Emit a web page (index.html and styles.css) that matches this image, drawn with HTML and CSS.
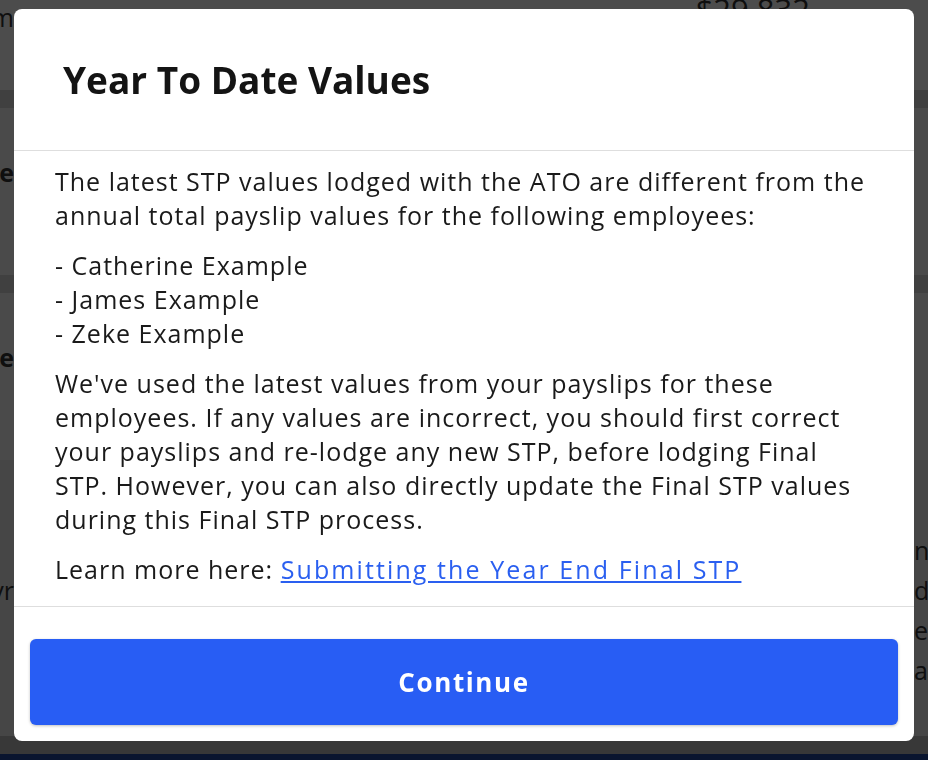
FILE: index.html
```html
<html>

<head>
    <title>Year To Date Values</title>
    <link rel="stylesheet" href="styles.css">
</head>

<body>

    <div class="page">
        <div class="row row-top">
            <span class="frag-left">Sum</span>
            <span class="amount">$29,832</span>
            <span class="frag-right"></span>
        </div>
        <div class="band"></div>
        <div class="row row-emp">
            <div class="frag-left">
                <div class="stack">
                    <b>Catherine</b>
                    <span>Program</span>
                </div>
            </div>
        </div>
        <div class="band"></div>
        <div class="row row-emp">
            <div class="frag-left">
                <div class="stack">
                    <b>Employee</b>
                    <span>Program</span>
                </div>
            </div>
        </div>
        <div class="row row-note">
            <div class="frag-left">
                <div class="stack">
                    <span>you may</span>
                    <span>weekly pay yr</span>
                    <span>hour</span>
                    <span>lodg</span>
                </div>
            </div>
            <div class="frag-right">
                <div class="stack">
                    <span>n</span>
                    <span>d</span>
                    <span>ei</span>
                    <span>a</span>
                </div>
            </div>
        </div>
        <div class="footer-bar"></div>
    </div>

    <div class="overlay">
        <div class="modal">
            <div class="modal-header">
                <h2>Year To Date Values</h2>
            </div>
            <div class="modal-body">
                <p>The latest STP values lodged with the ATO are different from the annual total payslip values for the following employees:</p>
                <p>- Catherine Example<br>- James Example<br>- Zeke Example</p>
                <p>We've used the latest values from your payslips for these employees. If any values are incorrect, you should first correct your payslips and re-lodge any new STP, before lodging Final STP. However, you can also directly update the Final STP values during this Final STP process.</p>
                <p>Learn more here: <a href="#">Submitting the Year End Final STP</a></p>
            </div>
            <div class="modal-footer">
                <button class="btn-continue">Continue</button>
            </div>
        </div>
    </div>

</body>

</html>
```

FILE: styles.css
```css
body {
    margin: 0;
    height: 760px;
    overflow: hidden;
    font-family: 'Open Sans', 'Noto Sans', sans-serif;
    color: #1a1a1a;
    background-color: #ffffff;
}

/* page behind the dialog */

.page {
    display: flex;
    flex-direction: column;
    height: 760px;
    font-size: 25px;
    color: #333333;
}

.row {
    display: flex;
    justify-content: space-between;
    background-color: #f7f7f7;
}

.row-top {
    height: 90px;
    background-color: #ffffff;
    align-items: flex-start;
}

.band {
    height: 18px;
    background-color: #d8d8d8;
}

.row-emp {
    height: 167px;
    padding-top: 44px;
    box-sizing: border-box;
}

.row-note {
    flex: 1;
    padding-top: 70px;
    background-color: #ececec;
}

.footer-bar {
    height: 18px;
    background-color: #bbbbbb;
    border-bottom: 6px solid #22479e;
}

.frag-left {
    width: 14px;
    overflow: hidden;
    display: flex;
    justify-content: flex-end;
    white-space: nowrap;
}

.frag-right {
    width: 14px;
    overflow: hidden;
    white-space: nowrap;
}

.amount {
    margin-left: auto;
    margin-right: 104px;
    margin-top: -8px;
    font-size: 31px;
    line-height: 34px;
}

.stack {
    display: flex;
    flex-direction: column;
    line-height: 40px;
}

.stack b {
    font-weight: 700;
}

/* dialog */

.overlay {
    position: fixed;
    top: 0;
    left: 0;
    right: 0;
    bottom: 0;
    background-color: rgba(0, 0, 0, 0.7);
    display: flex;
    justify-content: center;
    align-items: flex-start;
    padding-top: 9px;
}

.modal {
    width: 900px;
    background-color: #ffffff;
    border-radius: 8px;
    overflow: hidden;
}

.modal-header {
    padding: 50px 49px;
    border-bottom: 1px solid #dedede;
}

.modal-header h2 {
    margin: 0;
    font-size: 37px;
    line-height: 41px;
    font-weight: 700;
    color: #141414;
}

.modal-body {
    padding: 13px 44px 4px 41px;
    font-size: 25px;
    line-height: 34px;
    letter-spacing: 1px;
    border-bottom: 1px solid #dedede;
}

.modal-body p {
    margin: 0 0 16px;
}

.modal-body a {
    color: #2a5ff0;
    letter-spacing: 2.1px;
}

.modal-footer {
    padding: 32px 16px 16px;
}

.btn-continue {
    display: block;
    width: 100%;
    height: 86px;
    border: none;
    border-radius: 6px;
    background-color: #285df4;
    box-shadow: 0 1px 3px rgba(0, 0, 0, 0.25);
    color: #ffffff;
    font-family: 'Open Sans', 'Noto Sans', sans-serif;
    font-size: 26px;
    font-weight: 700;
    letter-spacing: 1.6px;
}
```
